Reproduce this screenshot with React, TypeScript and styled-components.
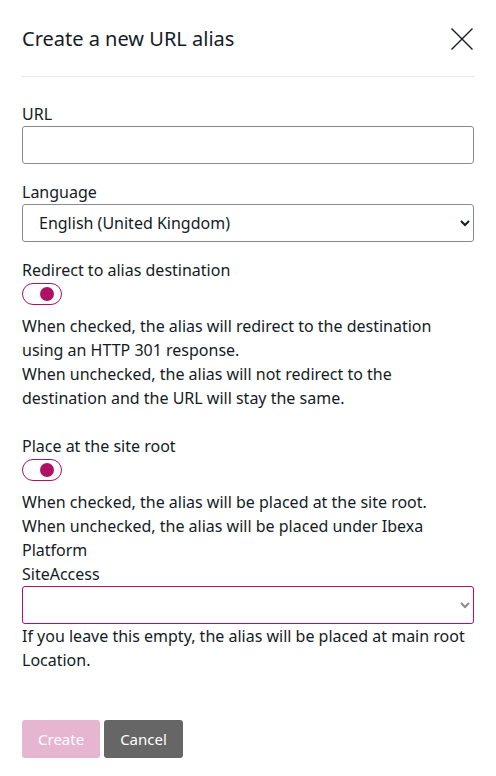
import React from 'react';
import styled, {createGlobalStyle} from 'styled-components';

const GlobalStyle = createGlobalStyle`
  body {
    margin: 0;
    background: #fff;
    font-family: "Noto Sans", "Open Sans", sans-serif;
    color: #131c26;
  }
`;

const Modal = styled.div`
  padding: 24px 22px 18px;
  display: flex;
  flex-direction: column;
`;

const Header = styled.div`
  display: flex;
  align-items: center;
  justify-content: space-between;
  padding-bottom: 22px;
  border-bottom: 1px solid #e8e8e8;
`;

const Title = styled.h1`
  margin: 0;
  font-size: 20px;
  font-weight: 400;
  line-height: 30px;
`;

const CloseButton = styled.button`
  border: 0;
  background: none;
  padding: 0;
  width: 24px;
  height: 24px;
  display: flex;
  align-items: center;
  justify-content: center;
  cursor: pointer;
`;

const Body = styled.div`
  padding-top: 25px;
  display: flex;
  flex-direction: column;
`;

const Field = styled.div<{$gap?: number}>`
  display: flex;
  flex-direction: column;
  margin-bottom: ${p => p.$gap ?? 16}px;
`;

const Label = styled.label`
  font-size: 16px;
  line-height: 24px;
`;

const TextInput = styled.input`
  box-sizing: border-box;
  height: 38px;
  width: 100%;
  border: 1px solid #878b90;
  border-radius: 3px;
  font: inherit;
  padding: 0 16px;
`;

const Select = styled.select<{$accent?: boolean}>`
  box-sizing: border-box;
  height: 38px;
  width: 100%;
  border: 1px solid ${p => (p.$accent ? '#ae1164' : '#878b90')};
  border-radius: 3px;
  background: #fff;
  font-family: inherit;
  font-size: 16px;
  color: ${p => (p.$accent ? '#8a8a8a' : '#131c26')};
  padding: 0 12px;
`;

const Toggle = styled.span<{$on: boolean}>`
  box-sizing: border-box;
  display: flex;
  align-items: center;
  justify-content: ${p => (p.$on ? 'flex-end' : 'flex-start')};
  width: 40px;
  height: 22px;
  margin: 1px 0 9px;
  padding: 0 7px;
  border: 1px solid #ae1164;
  border-radius: 11px;
  background: #fff;

  &::after {
    content: '';
    width: 14px;
    height: 14px;
    border-radius: 50%;
    background: #ae1164;
  }
`;

const Help = styled.div`
  font-size: 16px;
  line-height: 24px;
`;

const Footer = styled.div`
  display: flex;
  gap: 4px;
  margin-top: 48px;
`;

const Button = styled.button<{$variant: 'primary' | 'secondary'}>`
  height: 38px;
  padding: 0 16px;
  border: 0;
  border-radius: 3px;
  font-family: inherit;
  font-size: 15px;
  color: #fff;
  background: ${p => (p.$variant === 'primary' ? '#e6b6d1' : '#666666')};
`;

const CloseIcon = () => (
  <svg width="24" height="24" viewBox="0 0 24 24">
    <path d="M1.5 1.5 L22.5 22.5 M22.5 1.5 L1.5 22.5" stroke="#131c26" strokeWidth="1.4" fill="none" />
  </svg>
);

export default function App() {
  return (
    <Modal>
      <GlobalStyle />
      <Header>
        <Title>Create a new URL alias</Title>
        <CloseButton aria-label="Close">
          <CloseIcon />
        </CloseButton>
      </Header>
      <Body>
        <Field>
          <Label>URL</Label>
          <TextInput type="text" />
        </Field>
        <Field>
          <Label>Language</Label>
          <Select defaultValue="en">
            <option value="en">English (United Kingdom)</option>
          </Select>
        </Field>
        <Field $gap={24}>
          <Label>Redirect to alias destination</Label>
          <Toggle $on />
          <Help>
            When checked, the alias will redirect to the destination using an HTTP 301 response.
            <br />
            When unchecked, the alias will not redirect to the destination and the URL will stay the same.
          </Help>
        </Field>
        <Field $gap={0}>
          <Label>Place at the site root</Label>
          <Toggle $on />
          <Help>
            When checked, the alias will be placed at the site root.
            <br />
            When unchecked, the alias will be placed under Ibexa Platform
          </Help>
        </Field>
        <Field $gap={0}>
          <Label>SiteAccess</Label>
          <Select $accent defaultValue="">
            <option value=""></option>
          </Select>
          <Help>If you leave this empty, the alias will be placed at main root Location.</Help>
        </Field>
        <Footer>
          <Button $variant="primary">Create</Button>
          <Button $variant="secondary">Cancel</Button>
        </Footer>
      </Body>
    </Modal>
  );
}
